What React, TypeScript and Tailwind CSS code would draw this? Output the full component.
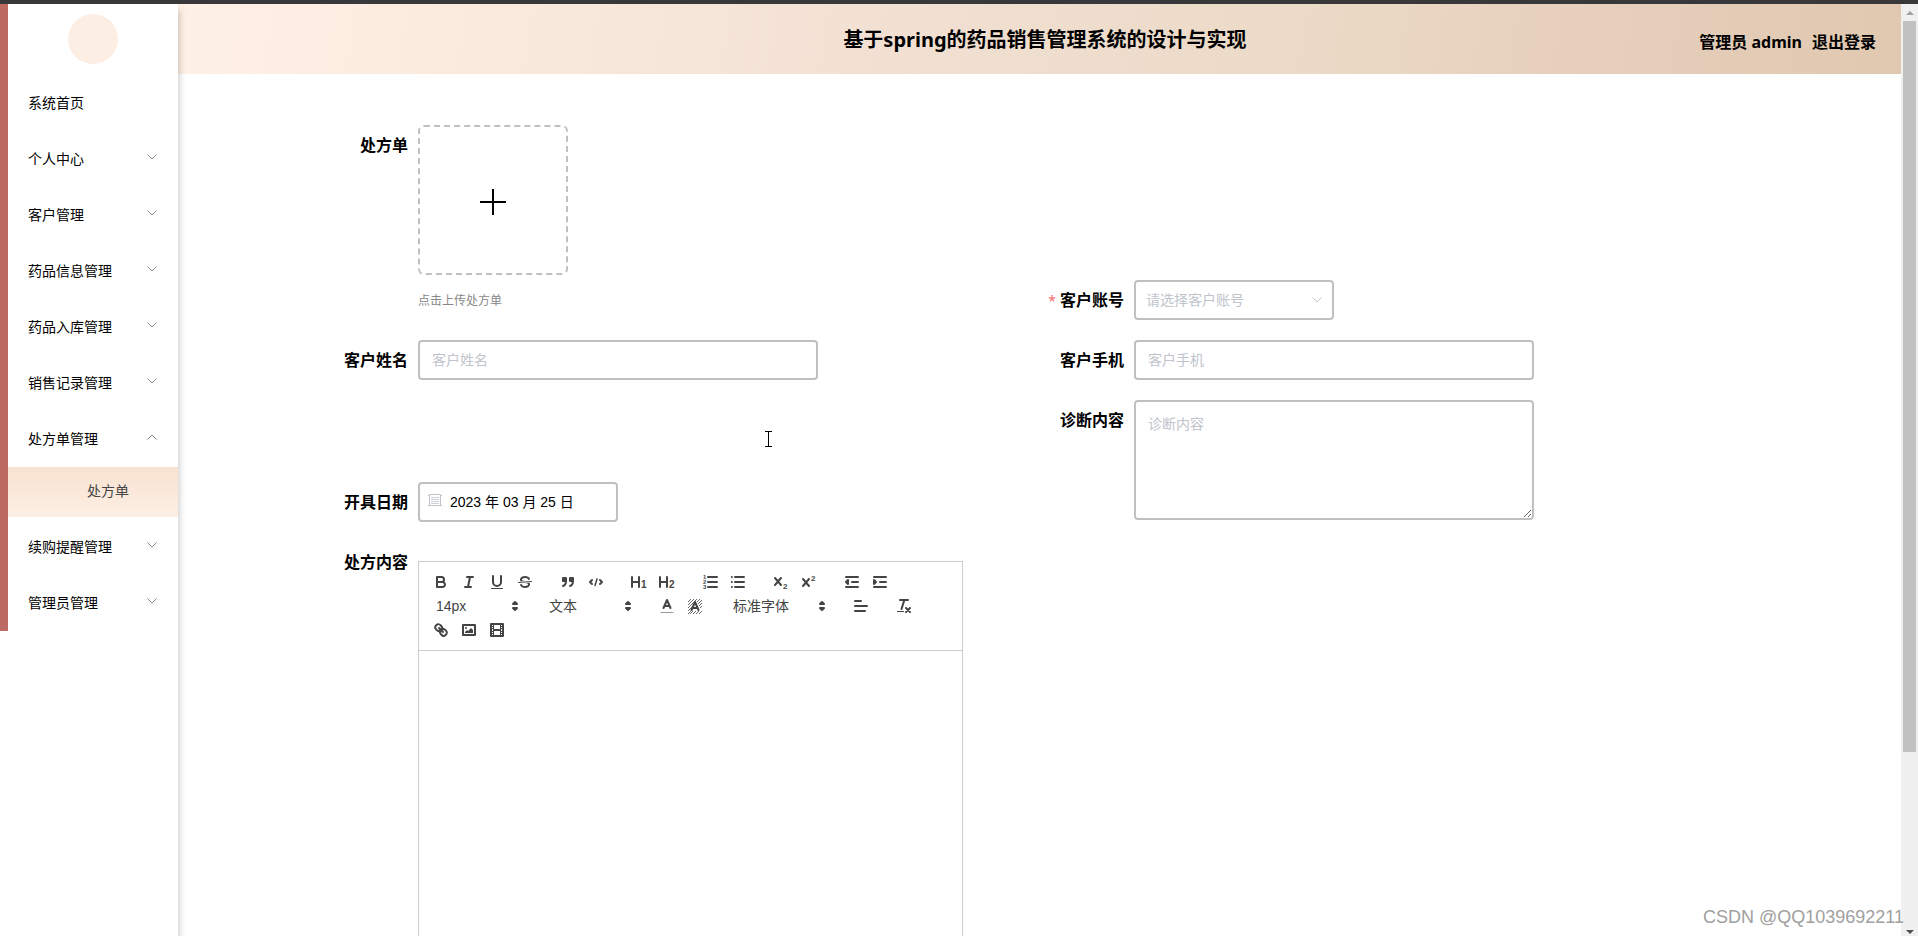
import clsx from "clsx";
import { useState } from "react";
import type { ReactNode } from "react";

const menus = [
  { name: "个人中心" },
  { name: "客户管理" },
  { name: "药品信息管理" },
  { name: "药品入库管理" },
  { name: "销售记录管理" },
  { name: "处方单管理", children: ["处方单"] },
  { name: "续购提醒管理" },
  { name: "管理员管理" },
];

const inputClass =
  "h-10 rounded border-2 border-[#c0c0c0] bg-white px-3 pb-[2px] text-sm text-black outline-none placeholder:text-[#c0c4cc]";

const Chevron = ({ up = false, className = "" }) => (
  <svg
    viewBox="0 0 12 12"
    className={clsx("h-3 w-3", className)}
    fill="none"
    stroke="currentColor"
    aria-hidden="true"
  >
    <path d={up ? "M1.5 8.5 6 4l4.5 4.5" : "M1.5 3.5 6 8l4.5-4.5"} />
  </svg>
);

const Sidebar = () => {
  const [opened, setOpened] = useState("处方单管理");

  return (
    <aside className="relative z-10 w-[178px] shrink-0 bg-white shadow-[2px_6px_6px_rgba(0,0,0,0.18)]">
      <div className="border-l-8 border-[#bd6b62]">
        <div className="flex h-[71px] justify-center pt-[10px]">
          <div className="h-[50px] w-[50px] rounded-full bg-[#fdeee4]" />
        </div>
        <nav className="text-sm text-black">
          <a href="#home" className="flex h-14 items-center pl-5">
            系统首页
          </a>
          {menus.map((menu) => (
            <div key={menu.name}>
              <button
                type="button"
                onClick={() => setOpened(opened === menu.name ? "" : menu.name)}
                className="flex h-14 w-full items-center justify-between pr-5 pl-5"
              >
                {menu.name}
                <Chevron
                  up={opened === menu.name}
                  className="mb-1 text-[#808388]"
                />
              </button>
              {opened === menu.name &&
                menu.children?.map((child) => (
                  <a
                    key={child}
                    href="#prescription"
                    className="mb-[2px] flex h-[50px] items-center bg-gradient-to-b from-[#f8e2d0] to-[#fdeee4] pb-[2px] pl-[79px] text-[#444]"
                  >
                    {child}
                  </a>
                ))}
            </div>
          ))}
        </nav>
      </div>
    </aside>
  );
};

const Header = () => (
  <header className="grid h-[70px] grid-cols-[1fr_auto_1fr] items-center bg-[linear-gradient(100deg,#fff0e6_0%,#fbebdf_15%,#f2e1d3_40%,#ebdac7_65%,#e6cfbc_82%,#e0c8b0_100%)] pr-[25px] pl-9 font-bold text-black">
    <h1 className="col-start-2 pt-[2px] text-xl">
      基于spring的药品销售管理系统的设计与实现
    </h1>
    <div className="flex justify-end gap-[10px] pt-[6px] text-base">
      <span>管理员 admin</span>
      <button type="button">退出登录</button>
    </div>
  </header>
);

interface FieldProps {
  id: string;
  label: string;
  required?: boolean;
  className?: string;
  children: ReactNode;
}

const Field = ({ id, label, required, className, children }: FieldProps) => (
  <div className={clsx("flex items-start", className)}>
    <label
      htmlFor={id}
      className="w-[120px] shrink-0 pr-[10px] text-right text-base leading-10 font-bold text-black"
    >
      {required && (
        <span className="mr-1 text-sm font-normal text-[#f56c6c]">*</span>
      )}
      {label}
    </label>
    {children}
  </div>
);

/* Editor toolbar */
const Tool = ({ title, children }: { title: string; children: ReactNode }) => (
  <button
    type="button"
    title={title}
    aria-label={title}
    className="h-6 w-7 px-[5px] py-[3px] text-[#444]"
  >
    <svg
      viewBox="0 0 18 18"
      className="h-[18px] w-[18px]"
      fill="none"
      stroke="currentColor"
      strokeWidth="2"
      strokeLinejoin="round"
      strokeLinecap="round"
    >
      {children}
    </svg>
  </button>
);

const Group = ({ children }: { children: ReactNode }) => (
  <div className="mr-[15px] flex h-6">{children}</div>
);

const Picker = ({ label, options, className }) => (
  <div className={clsx("relative h-6 text-[#444]", className)}>
    <select
      aria-label={label}
      className="h-6 w-full appearance-none bg-transparent pl-[9px] text-sm outline-none"
    >
      {options.map((o) => (
        <option key={o}>{o}</option>
      ))}
    </select>
    <svg
      viewBox="0 0 18 18"
      className="pointer-events-none absolute top-[3px] right-px h-[18px] w-[18px]"
      fill="currentColor"
      stroke="currentColor"
      strokeWidth="2"
      strokeLinejoin="round"
      aria-hidden="true"
    >
      <polygon points="7 11 9 13 11 11 7 11" />
      <polygon points="7 7 9 5 11 7 7 7" />
    </svg>
  </div>
);

const Small = ({ x, y, size, children }) => (
  <text
    x={x}
    y={y}
    fontSize={size}
    fill="currentColor"
    stroke="none"
    className="font-['Liberation_Sans'] font-bold"
  >
    {children}
  </text>
);

const Toolbar = () => (
  <div className="flex flex-wrap border border-[#ccc] p-2 font-['Liberation_Sans','Noto_Sans_CJK_SC',sans-serif]">
    <Group>
      <Tool title="加粗">
        <path d="M5,4H9.5A2.5,2.5,0,0,1,12,6.5v0A2.5,2.5,0,0,1,9.5,9H5V4Z" />
        <path d="M5,9h5.5A2.5,2.5,0,0,1,13,11.5v0A2.5,2.5,0,0,1,10.5,14H5V9Z" />
      </Tool>
      <Tool title="斜体">
        <path d="M7 4h6M5 14h6M8 14 10 4" />
      </Tool>
      <Tool title="下划线">
        <path d="M5,3V9a4.012,4.012,0,0,0,4,4H9a4.012,4.012,0,0,0,4-4V3" />
        <path strokeWidth="1" d="M3.5 15.5h11" />
      </Tool>
      <Tool title="删除线">
        <path strokeWidth="1" d="M15.5 8.5l-13 1" />
        <path
          stroke="none"
          fill="currentColor"
          d="M9.007,8C6.542,7.791,6,7.519,6,6.5,6,5.792,7.283,5,9,5c1.571,0,2.765.679,2.969,1.309a1,1,0,0,0,1.9-.617C13.356,4.106,11.354,3,9,3,6.2,3,4,4.538,4,6.5a3.2,3.2,0,0,0,.5,1.843Z"
        />
        <path
          stroke="none"
          fill="currentColor"
          d="M8.984,10C11.457,10.208,12,10.479,12,11.5c0,.708-1.283,1.5-3,1.5-1.571,0-2.765-.679-2.969-1.309a1,1,0,1,0-1.9.617C4.644,13.894,6.646,15,9,15c2.8,0,5-1.538,5-3.5a3.2,3.2,0,0,0-.5-1.843Z"
        />
      </Tool>
    </Group>
    <Group>
      <Tool title="引用">
        <rect fill="currentColor" height="3" width="3" x="4" y="5" />
        <rect fill="currentColor" height="3" width="3" x="11" y="5" />
        <path d="M7,8c0,4.031-3,5-3,5M14,8c0,4.031-3,5-3,5" />
      </Tool>
      <Tool title="代码">
        <path d="M5 7 3 9l2 2M13 7l2 2-2 2" />
        <path strokeWidth="1.5" d="M10 6 8 12.5" />
      </Tool>
    </Group>
    <Group>
      <Tool title="标题一">
        <path d="M2 4v10M9 4v10M2 9h7" />
        <Small x="11" y="15" size="10">
          1
        </Small>
      </Tool>
      <Tool title="标题二">
        <path d="M2 4v10M9 4v10M2 9h7" />
        <Small x="11" y="15" size="10">
          2
        </Small>
      </Tool>
    </Group>
    <Group>
      <Tool title="有序列表">
        <path d="M7 4h9M7 9h9M7 14h9" />
        <Small x="2" y="6" size="6">
          1
        </Small>
        <Small x="2" y="11" size="6">
          2
        </Small>
        <Small x="2" y="16" size="6">
          3
        </Small>
      </Tool>
      <Tool title="无序列表">
        <path d="M6 4h9M6 9h9M6 14h9M2.8 4h.1M2.8 9h.1M2.8 14h.1" />
      </Tool>
    </Group>
    <Group>
      <Tool title="下标">
        <path d="M3 5l6 7M9 5l-6 7" />
        <Small x="11" y="16" size="8">
          2
        </Small>
      </Tool>
      <Tool title="上标">
        <path d="M3 6l6 7M9 6l-6 7" />
        <Small x="11" y="8" size="8">
          2
        </Small>
      </Tool>
    </Group>
    <Group>
      <Tool title="减少缩进">
        <path d="M3 14h12M3 4h12M9 9h6" />
        <path fill="currentColor" d="M5 7v4L3 9Z" />
      </Tool>
      <Tool title="增加缩进">
        <path d="M3 14h12M3 4h12M9 9h6" />
        <path fill="currentColor" d="M3 7v4l2-2Z" />
      </Tool>
    </Group>
    <Group>
      <Picker
        label="字号"
        options={["14px", "16px", "18px"]}
        className="w-[98px]"
      />
    </Group>
    <Group>
      <Picker
        label="段落格式"
        options={["文本", "标题1", "标题2"]}
        className="w-[98px]"
      />
    </Group>
    <Group>
      <Tool title="字体颜色">
        <path d="M5.5 11 9 3l3.5 8M11.6 9H6.4" />
        <path strokeWidth="1" stroke="#999" d="M3 15.5h12" />
      </Tool>
      <Tool title="背景颜色">
        <path
          strokeWidth="0.8"
          strokeLinecap="butt"
          d="M2 5l3-3M2 8l6-6M2 11l9-9M2 14l4-4M2 17l3-3M4 17l3-3M7 17l3-3M10 17l3-3M11 5l3-3M12 7l4-4M13 9l3-3M14 11l2-2M13 17l3-3"
        />
        <path d="M5.5 13 9 5l3.5 8M11.6 11H6.4" />
      </Tool>
    </Group>
    <Group>
      <Picker
        label="字体"
        options={["标准字体", "衬线字体", "等宽字体"]}
        className="w-[108px]"
      />
    </Group>
    <Group>
      <Tool title="对齐">
        <path d="M3 9h12M3 14h10M3 4h6" />
      </Tool>
    </Group>
    <Group>
      <Tool title="清除格式">
        <path d="M5 3h8M6.5 12 9.35 3M11 11l4 4M15 11l-4 4" />
        <path strokeWidth="1" d="M2.5 14.5h6" />
      </Tool>
    </Group>
    <Group>
      <Tool title="链接">
        <path d="M7 7l4 4" />
        <path d="M8.9,4.577a3.476,3.476,0,0,1,.36,4.679A3.476,3.476,0,0,1,4.577,8.9C3.185,7.5,2.035,6.4,4.217,4.217S7.5,3.185,8.9,4.577Z" />
        <path d="M13.423,9.1a3.476,3.476,0,0,0-4.679-.36,3.476,3.476,0,0,0,.36,4.679c1.392,1.392,2.5,2.542,4.679.36S14.815,10.5,13.423,9.1Z" />
      </Tool>
      <Tool title="图片">
        <rect height="10" width="12" x="3" y="4" />
        <circle cx="6" cy="7" r="1" fill="currentColor" stroke="none" />
        <polygon
          fill="currentColor"
          stroke="none"
          points="5 12 5 11 7 9 8 10 11 7 13 9 13 12"
        />
      </Tool>
      <Tool title="视频">
        <rect height="12" width="12" x="3" y="3" />
        <path
          strokeWidth="1"
          strokeLinecap="butt"
          d="M5.5 3v12M12.5 3v12M3 5.5h3M3 7.5h3M3 10.5h3M3 12.5h3M12 5.5h3M12 7.5h3M12 10.5h3M12 12.5h3"
        />
        <path strokeLinecap="butt" d="M5 9h8" />
      </Tool>
    </Group>
  </div>
);

const PrescriptionForm = () => {
  const [date, setDate] = useState("2023 年 03 月 25 日");

  return (
    <form className="grid grid-cols-2 gap-y-5 pt-[51px] pr-[171px] pl-[120px]">
      <Field id="file" label="处方单">
        <div className="pb-[10px]">
          <button
            id="file"
            type="button"
            aria-label="上传处方单"
            className="flex h-[150px] w-[150px] items-center justify-center rounded-md border-2 border-dashed border-[#c0c0c0] pt-1 text-black"
          >
            <svg viewBox="0 0 26 26" className="h-[26px] w-[26px]" aria-hidden="true">
              <path d="M13 0v26M0 13h26" stroke="currentColor" strokeWidth="2" />
            </svg>
          </button>
          <p className="mt-[17px] text-xs leading-[18px] text-[#888]">
            点击上传处方单
          </p>
        </div>
      </Field>
      <Field id="account" label="客户账号" required className="self-end">
        <div className="relative w-[200px]">
          <select
            id="account"
            className="h-10 w-full appearance-none rounded border-2 border-[#c0c0c0] bg-white px-[10px] text-sm text-[#c0c4cc] outline-none"
          >
            <option>请选择客户账号</option>
          </select>
          <Chevron className="pointer-events-none absolute top-[14px] right-[11px] text-[#c0c4cc]" />
        </div>
      </Field>

      <Field id="name" label="客户姓名">
        <input id="name" placeholder="客户姓名" className={clsx(inputClass, "w-[400px]")} />
      </Field>
      <Field id="phone" label="客户手机">
        <input id="phone" placeholder="客户手机" className={clsx(inputClass, "w-[400px]")} />
      </Field>

      <Field id="date" label="开具日期" className="self-end">
        <div className="relative w-[200px]">
          <input
            id="date"
            value={date}
            onChange={(e) => setDate(e.target.value)}
            className="h-10 w-full rounded border-2 border-[#c0c0c0] bg-white pb-[2px] pl-[30px] font-['Liberation_Sans','Noto_Sans_CJK_SC',sans-serif] text-sm text-black outline-none"
          />
          <svg
            viewBox="0 0 14 14"
            className="pointer-events-none absolute top-[11px] left-[10px] h-[14px] w-[14px] text-[#c0c4cc]"
            fill="none"
            stroke="currentColor"
            aria-hidden="true"
          >
            <path d="M1.5 1.5h11v11h-11ZM0 2.5h2M12 2.5h2M0 12.5h2M12 12.5h2" />
            <path strokeWidth="0.8" d="M3 4.500h8M3 6.500h8M3 8.500h8M3 10.500h8" />
          </svg>
        </div>
      </Field>
      <Field id="diagnosis" label="诊断内容">
        <textarea
          id="diagnosis"
          placeholder="诊断内容"
          className="mb-[2px] block h-[120px] w-[400px] resize rounded border-2 border-[#c0c0c0] px-3 py-3 text-sm text-black outline-none placeholder:text-[#c0c4cc]"
        />
      </Field>

      <Field id="content" label="处方内容" className="col-span-2">
        <div className="mt-[19px] w-[545px]">
          <Toolbar />
          <textarea
            id="content"
            className="block h-[500px] w-full resize-none border border-t-0 border-[#ccc] px-4 py-3 text-sm outline-none"
          />
        </div>
      </Field>
    </form>
  );
};

const Scrollbar = () => (
  <div
    aria-hidden="true"
    className="flex w-[17px] shrink-0 flex-col items-center bg-[#f0f0f0]"
  >
    <svg viewBox="0 0 16 17" className="h-[17px] w-4 shrink-0 fill-[#a0a0a0]">
      <path d="M4 11h8L8 7Z" />
    </svg>
    <div className="h-[calc(100%-201px)] w-[13px] bg-[#c1c1c1]" />
    <svg viewBox="0 0 16 8" className="mt-auto h-2 w-4 shrink-0 fill-[#505050]">
      <path d="M4 2h8L8 6Z" />
    </svg>
  </div>
);

const App = () => (
  <div className="relative flex h-screen flex-col overflow-hidden bg-white font-['Noto_Sans','Noto_Sans_CJK_SC',sans-serif]">
    <div className="h-1 shrink-0 bg-[#38383a]" />
    <div className="flex min-h-0 flex-1">
      <Sidebar />
      <main className="min-w-0 flex-1 overflow-hidden">
        <Header />
        <PrescriptionForm />
      </main>
      <Scrollbar />
    </div>

    {/* Mouse pointer */}
    <svg
      viewBox="0 0 7 16"
      className="pointer-events-none absolute top-[431px] left-[765px] h-4 w-[7px]"
      fill="none"
      stroke="#000"
      aria-hidden="true"
    >
      <path d="M0 .5h7M0 15.5h7M3.5 .5v15" />
    </svg>

    <div className="pointer-events-none absolute right-[14px] bottom-[7px] z-20 font-['Liberation_Sans',sans-serif] text-lg leading-6 text-[#a0a0a0] [text-shadow:1px_1px_0_#fff]">
      CSDN @QQ1039692211
    </div>
  </div>
);

export default App;
